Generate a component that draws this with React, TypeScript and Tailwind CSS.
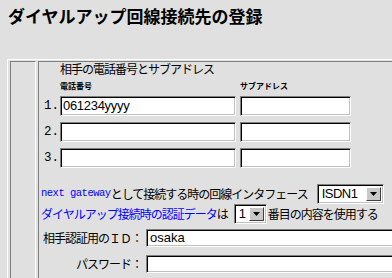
import React from "react";

const jp = "font-['Noto_Sans_CJK_JP',sans-serif]";
const inputCls =
  "bg-white border border-t-[#808080] border-l-[#808080] border-b-white border-r-white shadow-[inset_1px_1px_0_#000,inset_-1px_-1px_0_#c0c0c0]";

function Select({ value, width }: { value: string; width: number }) {
  return (
    <div
      className={`${inputCls} flex items-center h-[20px] pl-[4px] pr-[2px] shrink-0`}
      style={{ width }}
    >
      <span className="flex-1 text-[13px] leading-[14px] text-black font-['Liberation_Sans',sans-serif] tracking-[-0.5px]">
        {value}
      </span>
      <div className="w-[15px] h-[14px] bg-[#c8c8c8] border border-t-white border-l-white border-b-[#404040] border-r-[#404040] flex items-center justify-center">
        <svg width="7" height="4" viewBox="0 0 7 4">
          <path d="M0 0H7L3.5 4Z" fill="#000" />
        </svg>
      </div>
    </div>
  );
}

export default function App() {
  return (
    <div className="w-[392px] h-[278px] overflow-hidden bg-[#e0e0e0] text-black">
      <h1 className={`${jp} pl-[8px] pt-[6px] text-[17px] leading-[20px] font-bold whitespace-nowrap`}>
        ダイヤルアップ回線接続先の登録
      </h1>
      <div className="mt-[33px] ml-[7px] w-[600px] border-t border-l border-white flex pt-[1px] pl-[2px] gap-[2px]">
        <div className="w-[26px] h-[300px] shrink-0 border-t border-l border-t-[#808080] border-l-[#808080] border-r border-r-white" />
        <div className="flex-1 h-[300px] border-t border-l border-[#808080]">
          {/* phone numbers */}
          <div className="pl-[5px]">
            <div className={`${jp} ml-[16px] text-[12px] leading-[14px] tracking-[-1px] whitespace-nowrap`}>
              相手の電話番号とサブアドレス
            </div>
            <div className={`${jp} ml-[16px] mt-[5px] flex h-[10px] text-[8px] leading-[10px] font-bold whitespace-nowrap`}>
              <span className="w-[180px]">電話番号</span>
              <span>サブアドレス</span>
            </div>
            <div className="mt-[5px] flex flex-col gap-[6px]">
              {["1.", "2.", "3."].map((n, i) => (
                <div key={n} className="flex items-center h-[20px]">
                  <span className="w-[16px] text-[12.5px] font-['Liberation_Mono',monospace]">{n}</span>
                  <div className={`${inputCls} w-[176px] h-[20px] flex items-center pl-[2px] text-[13px] tracking-[-0.3px] font-['Liberation_Sans',sans-serif]`}>
                    {i === 0 ? "061234yyyy" : ""}
                  </div>
                  <div className={`${inputCls} ml-[4px] w-[111px] h-[20px]`} />
                </div>
              ))}
            </div>
          </div>
          {/* gateway lines */}
          <div className="pl-[2px] mt-[16px]">
            <div className="flex items-center h-[20px] whitespace-nowrap">
              <span className="text-[10.5px] tracking-[-0.5px] text-[#0000ff] font-['Liberation_Mono',monospace]">
                next gateway
              </span>
              <span className={`${jp} text-[12px] tracking-[-1px]`}>として接続する時の回線インタフェース</span>
              <div className="ml-[9px]">
                <Select value="ISDN1" width={67} />
              </div>
            </div>
            <div className="flex items-center h-[20px] whitespace-nowrap">
              <span className={`${jp} text-[12px] tracking-[-1px] text-[#0000ff]`}>
                ダイヤルアップ接続時の認証データ
              </span>
              <span className={`${jp} text-[12px] tracking-[-1px]`}>は</span>
              <div className="ml-[6px]">
                <Select value="1" width={33} />
              </div>
              <span className={`${jp} text-[12px] tracking-[-1px] ml-[1px]`}>番目の内容を使用する</span>
            </div>
          </div>
          {/* auth */}
          <div className="mt-[5px] flex flex-col gap-[8px]">
            <div className="flex items-center h-[18px]">
              <span className={`${jp} w-[103px] text-right text-[12px] tracking-[-1px] whitespace-nowrap`}>
                相手認証用のＩＤ：
              </span>
              <div className={`${inputCls} ml-[4px] w-[320px] h-[18px] flex items-center pl-[3px] text-[13px] font-['Liberation_Sans',sans-serif]`}>
                osaka
              </div>
            </div>
            <div className="flex items-center h-[18px]">
              <span className={`${jp} w-[103px] text-right text-[12px] tracking-[-1px] whitespace-nowrap`}>
                パスワード：
              </span>
              <div className={`${inputCls} ml-[4px] w-[320px] h-[18px]`} />
            </div>
          </div>
        </div>
      </div>
    </div>
  );
}
